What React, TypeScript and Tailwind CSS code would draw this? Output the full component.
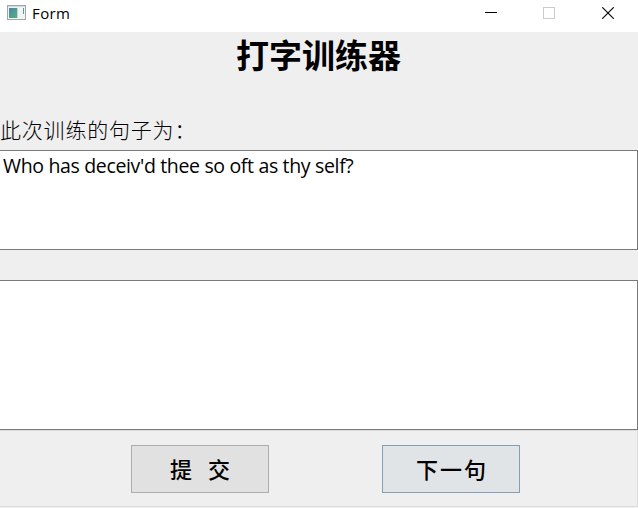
function WindowIcon() {
  return (
    <svg width="20" height="16" viewBox="0 0 20 16" shapeRendering="crispEdges">
      <defs>
        <linearGradient id="screen" x1="0" y1="0" x2="1" y2="1">
          <stop offset="0" stopColor="#4a86ae" />
          <stop offset="1" stopColor="#55b07a" />
        </linearGradient>
      </defs>
      <rect x="0.5" y="0.5" width="18" height="14" fill="#f1f3f4" stroke="#a0a6ac" />
      <rect x="1" y="1" width="17" height="1" fill="#d5d9dc" />
      <rect x="2" y="3" width="8" height="10" fill="url(#screen)" />
      <rect x="10" y="3" width="1" height="10" fill="#c9d0d3" />
      <rect x="16" y="3" width="1" height="6" fill="#5b9a9c" />
    </svg>
  );
}

function TitleBar() {
  return (
    <header className="flex h-8 shrink-0 items-start bg-white pl-[7px]">
      <div className="pt-[5px]">
        <WindowIcon />
      </div>
      <span className="ml-[5px] mt-[3px] font-['Open_Sans',sans-serif] text-[15px] leading-[21px] tracking-[0.4px]">
        Form
      </span>
      <div className="ml-auto flex pr-6 pt-[7px]">
        <svg className="mr-[46px]" width="12" height="12" shapeRendering="crispEdges">
          <path d="M0 5.5h12" stroke="#000" />
        </svg>
        <svg className="mr-[47px]" width="12" height="12" shapeRendering="crispEdges">
          <rect x="0.5" y="0.5" width="11" height="11" fill="none" stroke="#ccc" />
        </svg>
        <svg width="12" height="12">
          <path d="M0.3 0.3l11.4 11.4M11.7 0.3l-11.4 11.4" stroke="#000" strokeWidth="1.1" />
        </svg>
      </div>
    </header>
  );
}

export default function App() {
  return (
    <div className="flex h-[508px] w-[638px] flex-col overflow-hidden bg-[#efefef] font-['Noto_Sans_CJK_SC',sans-serif] text-black">
      <TitleBar />
      <h1 className="h-[81px] shrink-0 pr-px text-center text-[33px] font-bold leading-[45px]">打字训练器</h1>
      <p className="h-[37px] shrink-0 whitespace-nowrap text-[21px] font-light leading-[32px] tracking-[0.8px]">
        此次训练的句子为：
      </p>
      <div className="h-[100px] shrink-0 border-y border-r border-[#7a7a7a] bg-white pl-[3px] font-['Open_Sans',sans-serif] text-[19.5px] leading-[30px] tracking-[-0.34px]">
        Who has deceiv'd thee so oft as thy self?
      </div>
      <div className="mt-[30px] h-[150px] shrink-0 border-y border-r border-[#7a7a7a] bg-white" />
      <footer className="flex h-[77px] shrink-0 gap-[113px] border-y border-r border-[#dcdcdc] pl-[131px] pt-[14px]">
        <button className="flex h-12 w-[138px] items-center justify-center border border-[#adadad] bg-[#e1e1e1] pb-[2px] text-[22px] font-medium">
          <span>提</span>
          <span className="ml-4">交</span>
        </button>
        <button className="flex h-12 w-[138px] items-center justify-center border border-[#819fb9] bg-[#e0e4e7] pb-[2px] pl-0.5 text-[22px] font-medium tracking-[2px]">
          下一句
        </button>
      </footer>
    </div>
  );
}
